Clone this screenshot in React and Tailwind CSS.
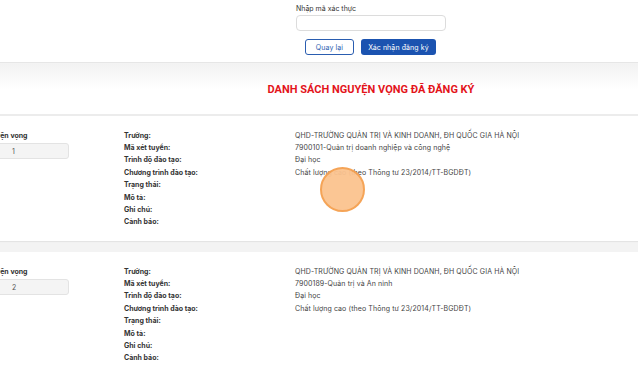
import React from "react";

const items = [
  {
    stt: "1",
    truong: "QHD-TRƯỜNG QUẢN TRỊ VÀ KINH DOANH, ĐH QUỐC GIA HÀ NỘI",
    ma: "7900101-Quản trị doanh nghiệp và công nghệ",
    trinhdo: "Đại học",
    chuongtrinh: "Chất lượng cao (theo Thông tư 23/2014/TT-BGDĐT)",
  },
  {
    stt: "2",
    truong: "QHD-TRƯỜNG QUẢN TRỊ VÀ KINH DOANH, ĐH QUỐC GIA HÀ NỘI",
    ma: "7900189-Quản trị và An ninh",
    trinhdo: "Đại học",
    chuongtrinh: "Chất lượng cao (theo Thông tư 23/2014/TT-BGDĐT)",
  },
];

function Row({ label, value }) {
  return (
    <div className="flex h-[12.4px] items-center">
      <div className="w-[171px] shrink-0 font-bold text-[#333]">{label}</div>
      <div className="text-[#444] tracking-[0.1px]">{value}</div>
    </div>
  );
}

function Item({ it }) {
  return (
    <div className="flex bg-white pt-[13px] h-[125px] shadow-[0_1px_1px_rgba(0,0,0,0.06)]">
      <div className="w-[142px] shrink-0 -ml-[18px]">
        <div className="h-[12.4px] flex items-center font-bold text-[#333]">Nguyện vọng</div>
        <div className="mt-[2px] h-[16px] w-[87px] rounded-[3px] border border-[#e3e3e3] bg-[#f4f4f4] flex items-center pl-[29px] text-[#555]">
          {it.stt}
        </div>
      </div>
      <div className="flex flex-col">
        <Row label="Trường:" value={it.truong} />
        <Row label="Mã xét tuyển:" value={it.ma} />
        <Row label="Trình độ đào tạo:" value={it.trinhdo} />
        <Row label="Chương trình đào tạo:" value={it.chuongtrinh} />
        <Row label="Trạng thái:" value="" />
        <Row label="Mô tả:" value="" />
        <Row label="Ghi chú:" value="" />
        <Row label="Cảnh báo:" value="" />
      </div>
    </div>
  );
}

export default function App() {
  return (
    <div
      className="relative w-[638px] h-[377px] overflow-hidden bg-[#f3f3f3] text-[7px] leading-none"
      style={{ fontFamily: "Inter, 'Noto Sans', sans-serif" }}
    >
      <div className="bg-white h-[63px] border-b border-[#e6e6e6] flex justify-center">
        <div className="w-[150px] ml-[104px] pt-[5px]">
          <div className="text-[#333] text-[7px]">Nhập mã xác thực</div>
          <div className="mt-[3px] h-[16px] rounded-[4px] border border-[#dcdcdc] bg-white" />
          <div className="mt-[8px] flex gap-[7px] pl-[9px]">
            <button className="h-[16px] w-[49px] rounded-[3px] border border-[#2a5db0] text-[#2a5db0] bg-white text-[7px] tracking-[0.1px]">
              Quay lại
            </button>
            <button className="h-[16px] w-[75px] rounded-[3px] bg-[#1b53b0] text-white text-[7px] tracking-[0.1px]">
              Xác nhận đăng ký
            </button>
          </div>
        </div>
      </div>
      <div className="h-[52px] mt-[1px] bg-gradient-to-b from-[#f2f2f2] via-white to-white border-b-2 border-[#ececec] flex items-center justify-center">
        <div
          className="ml-[104px] text-[#e3141b] font-bold text-[11px]"
          style={{ fontFamily: "Roboto, 'Liberation Sans', sans-serif" }}
        >
          DANH SÁCH NGUYỆN VỌNG ĐÃ ĐĂNG KÝ
        </div>
      </div>
      <div className="flex flex-col gap-[11px]">
        {items.map((it) => (
          <Item key={it.stt} it={it} />
        ))}
      </div>
      <div className="absolute left-[320px] top-[167px] h-[45px] w-[45px] rounded-full bg-[#fbc38f] border-2 border-[#f5a04f] opacity-95" />
    </div>
  );
}
